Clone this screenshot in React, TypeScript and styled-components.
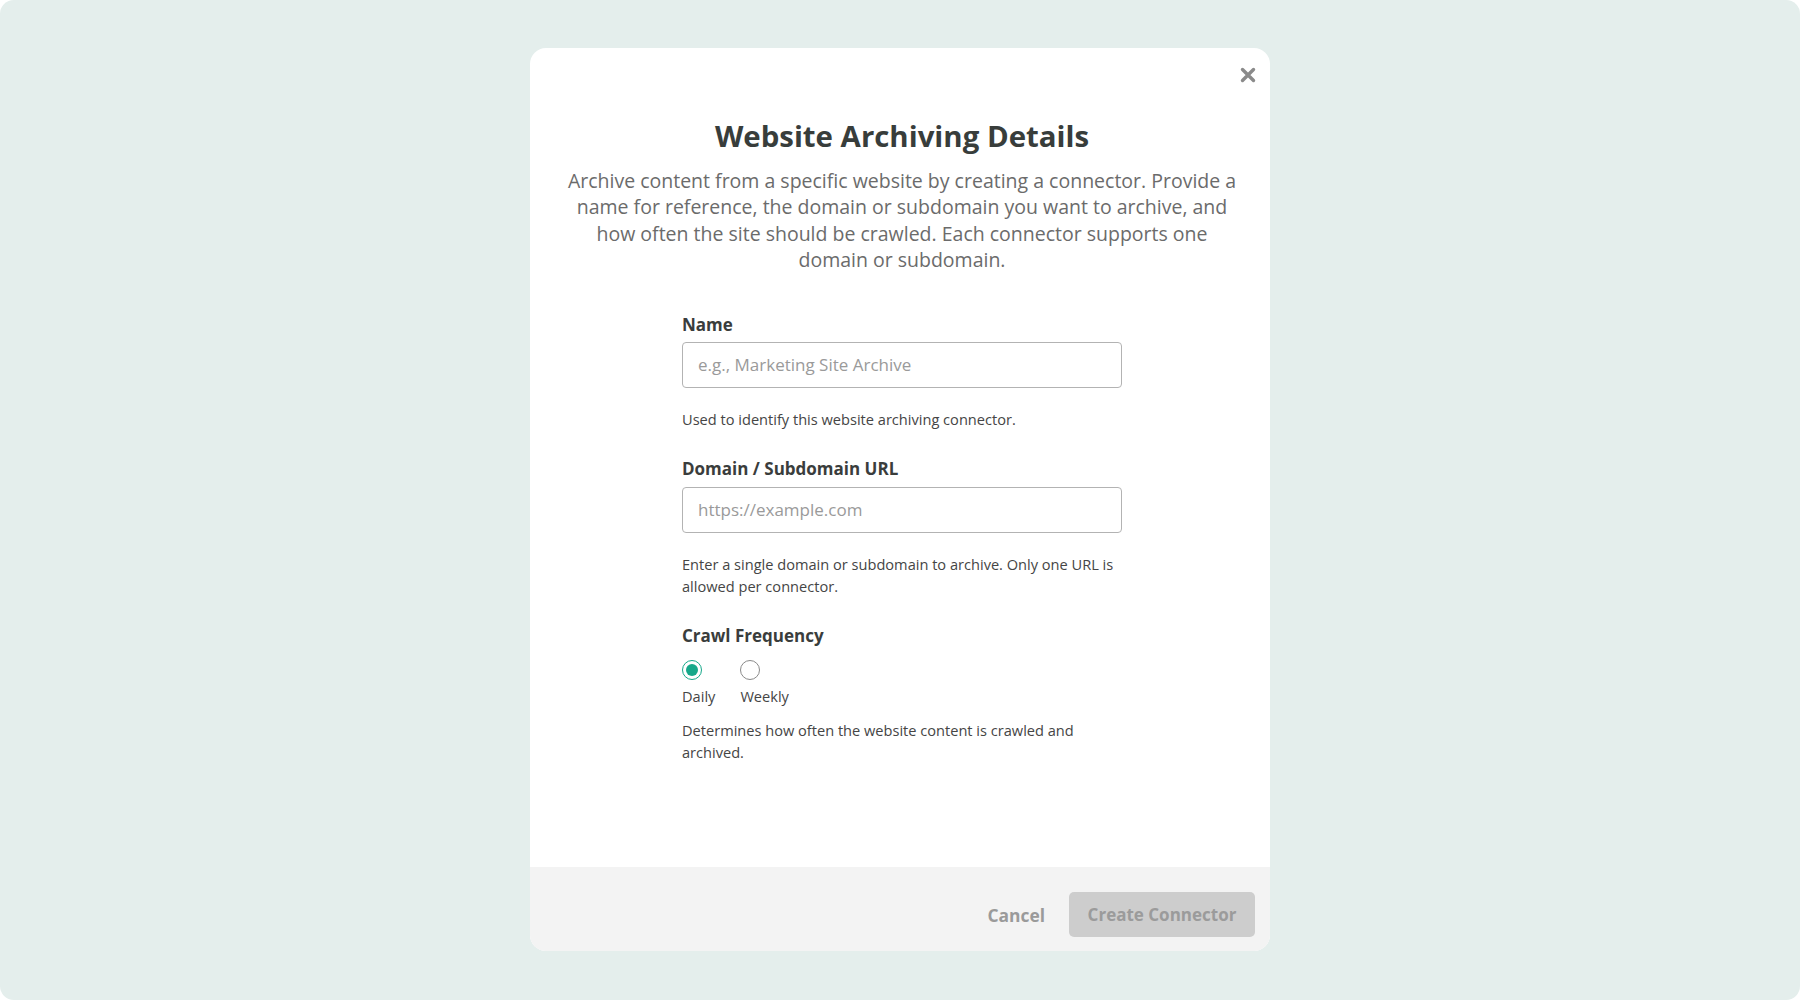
import React, { useState } from "react";
import styled, { createGlobalStyle } from "styled-components";

const Global = createGlobalStyle`
  html, body { margin: 0; padding: 0; background: #ffffff; }
  body { font-family: "Open Sans", "Noto Sans", sans-serif; }
  * { box-sizing: border-box; }
`;

const Frame = styled.div`
  width: 1800px;
  height: 1000px;
  background: #e4eeec;
  border-radius: 14px;
  display: flex;
  justify-content: center;
  padding-top: 48px;
`;

const Modal = styled.div`
  position: relative;
  width: 740px;
  height: 903px;
  background: #ffffff;
  border-radius: 16px;
  overflow: hidden;
  display: flex;
  flex-direction: column;
`;

const CloseButton = styled.button`
  position: absolute;
  top: 15px;
  right: 10px;
  width: 24px;
  height: 24px;
  border: none;
  background: transparent;
  padding: 0;
  display: flex;
  align-items: center;
  justify-content: center;
  cursor: pointer;
`;

const Body = styled.div`
  flex: 1;
  display: flex;
  flex-direction: column;
  align-items: center;
  padding: 69px 30px 0 34px;
`;

const Title = styled.h1`
  margin: 0;
  font-size: 29.4px;
  line-height: 38px;
  font-weight: 700;
  color: #383d3b;
  text-align: center;
`;

const Description = styled.p`
  margin: 13px 0 0;
  font-size: 19.5px;
  line-height: 26.4px;
  color: #6b6b6b;
  text-align: center;
  max-width: 676px;
`;

const Form = styled.div`
  width: 440px;
  margin-top: 39px;
  display: flex;
  flex-direction: column;
`;

const Field = styled.div<{ $gap?: number }>`
  display: flex;
  flex-direction: column;
  margin-bottom: ${(p) => p.$gap ?? 26}px;
`;

const Label = styled.label`
  font-size: 17px;
  line-height: 24px;
  font-weight: 700;
  color: #3a3d3c;
`;

const Input = styled.input<{ $top?: number }>`
  margin-top: ${(p) => p.$top ?? 5}px;
  height: 46px;
  width: 100%;
  border: 1.5px solid #b3b3b3;
  border-radius: 4px;
  padding: 0 15px;
  font-family: "Open Sans", "Noto Sans", sans-serif;
  font-size: 17px;
  color: #333;
  outline: none;
  &::placeholder { color: #9a9a9a; }
`;

const Help = styled.p<{ $top?: number }>`
  margin: ${(p) => p.$top ?? 20}px 0 0;
  font-size: 14.6px;
  line-height: 22px;
  color: #454545;
`;

const RadioRow = styled.div`
  margin-top: 12px;
  display: flex;
  gap: 25px;
`;

const RadioItem = styled.label`
  display: flex;
  flex-direction: column;
  align-items: flex-start;
  gap: 5px;
  cursor: pointer;
`;

const RadioCircle = styled.span<{ $checked: boolean }>`
  width: 20px;
  height: 20px;
  border-radius: 50%;
  border: 1.5px solid ${(p) => (p.$checked ? "#16a88a" : "#8a8a8a")};
  display: flex;
  align-items: center;
  justify-content: center;
  &::after {
    content: "";
    width: 12px;
    height: 12px;
    border-radius: 50%;
    background: ${(p) => (p.$checked ? "#16a88a" : "transparent")};
  }
`;

const RadioText = styled.span`
  font-size: 14.6px;
  line-height: 22px;
  color: #454545;
`;

const Footer = styled.div`
  height: 84px;
  background: #f3f3f3;
  display: flex;
  justify-content: flex-end;
  align-items: flex-start;
  gap: 24px;
  padding: 25px 15px 0 0;
`;

const CancelButton = styled.button`
  height: 45px;
  border: none;
  background: transparent;
  padding: 0;
  font-family: "Open Sans", "Noto Sans", sans-serif;
  font-size: 17.4px;
  font-weight: 700;
  color: #9a9a9a;
  cursor: pointer;
`;

const PrimaryButton = styled.button`
  height: 45px;
  width: 186px;
  border: none;
  border-radius: 5px;
  background: #cdcdcd;
  font-family: "Open Sans", "Noto Sans", sans-serif;
  font-size: 17px;
  font-weight: 700;
  color: #9b9b9b;
  cursor: not-allowed;
`;

export default function App() {
  const [freq, setFreq] = useState<"daily" | "weekly">("daily");
  return (
    <>
      <Global />
      <Frame>
        <Modal>
          <CloseButton aria-label="Close">
            <svg width="16" height="16" viewBox="0 0 16 16">
              <path d="M2.5 2.5 L13.5 13.5 M13.5 2.5 L2.5 13.5" stroke="#8a8a8a" strokeWidth="3.4" strokeLinecap="round" />
            </svg>
          </CloseButton>
          <Body>
            <Title>Website Archiving Details</Title>
            <Description>
              Archive content from a specific website by creating a connector. Provide a name for reference, the
              domain or subdomain you want to archive, and how often the site should be crawled. Each connector
              supports one domain or subdomain.
            </Description>
            <Form>
              <Field $gap={27}>
                <Label>Name</Label>
                <Input placeholder="e.g., Marketing Site Archive" />
                <Help>Used to identify this website archiving connector.</Help>
              </Field>
              <Field $gap={27}>
                <Label>Domain / Subdomain URL</Label>
                <Input $top={6} placeholder="https://example.com" />
                <Help $top={20}>
                  Enter a single domain or subdomain to archive. Only one URL is allowed per connector.
                </Help>
              </Field>
              <Field $gap={0}>
                <Label>Crawl Frequency</Label>
                <RadioRow>
                  <RadioItem onClick={() => setFreq("daily")}>
                    <RadioCircle $checked={freq === "daily"} />
                    <RadioText>Daily</RadioText>
                  </RadioItem>
                  <RadioItem onClick={() => setFreq("weekly")}>
                    <RadioCircle $checked={freq === "weekly"} />
                    <RadioText>Weekly</RadioText>
                  </RadioItem>
                </RadioRow>
                <Help $top={12}>Determines how often the website content is crawled and archived.</Help>
              </Field>
            </Form>
          </Body>
          <Footer>
            <CancelButton>Cancel</CancelButton>
            <PrimaryButton disabled>Create Connector</PrimaryButton>
          </Footer>
        </Modal>
      </Frame>
    </>
  );
}
